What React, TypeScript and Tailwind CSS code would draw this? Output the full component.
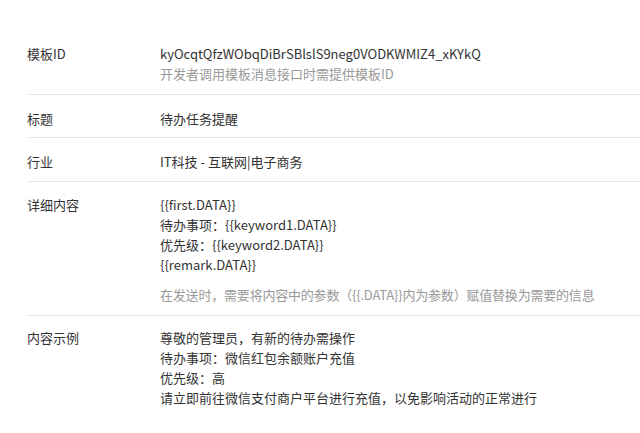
export default function App() {
  const font = { fontFamily: '"Microsoft YaHei", "Noto Sans CJK SC", "Noto Sans", sans-serif' }

  return (
    <div className="min-h-[433px] w-[640px] bg-white pt-[30px] pl-[27px] text-[13px] leading-5 text-[#333]" style={font}>
      {/* 模板ID */}
      <div className="flex border-b border-[#e7e7e7] pt-[14px] pb-[10px]">
        <div className="w-[133px] shrink-0">模板ID</div>
        <div>
          <div>kyOcqtQfzWObqDiBrSBlslS9neg0VODKWMIZ4_xKYkQ</div>
          <div className="text-[#999]">开发者调用模板消息接口时需提供模板ID</div>
        </div>
      </div>

      {/* 标题 */}
      <div className="flex border-b border-[#e7e7e7] pt-[14px] pb-[8px]">
        <div className="w-[133px] shrink-0">标题</div>
        <div>待办任务提醒</div>
      </div>

      {/* 行业 */}
      <div className="flex border-b border-[#e7e7e7] pt-[14px] pb-[9px]">
        <div className="w-[133px] shrink-0">行业</div>
        <div>IT科技 - 互联网|电子商务</div>
      </div>

      {/* 详细内容 */}
      <div className="flex border-b border-[#e7e7e7] pt-[13px] pb-[10px]">
        <div className="w-[133px] shrink-0">详细内容</div>
        <div>
          <div>{"{{first.DATA}}"}</div>
          <div>待办事项：{"{{keyword1.DATA}}"}</div>
          <div>优先级：{"{{keyword2.DATA}}"}</div>
          <div>{"{{remark.DATA}}"}</div>
          <div className="mt-[10px] text-[#999] tracking-[-0.2px]">
            在发送时，需要将内容中的参数（{"{{.DATA}}"}内为参数）赋值替换为需要的信息
          </div>
        </div>
      </div>

      {/* 内容示例 */}
      <div className="flex pt-[12px] pb-[10px]">
        <div className="w-[133px] shrink-0">内容示例</div>
        <div>
          <div>尊敬的管理员，有新的待办需操作</div>
          <div>待办事项：微信红包余额账户充值</div>
          <div>优先级：高</div>
          <div>请立即前往微信支付商户平台进行充值，以免影响活动的正常进行</div>
        </div>
      </div>
    </div>
  )
}
